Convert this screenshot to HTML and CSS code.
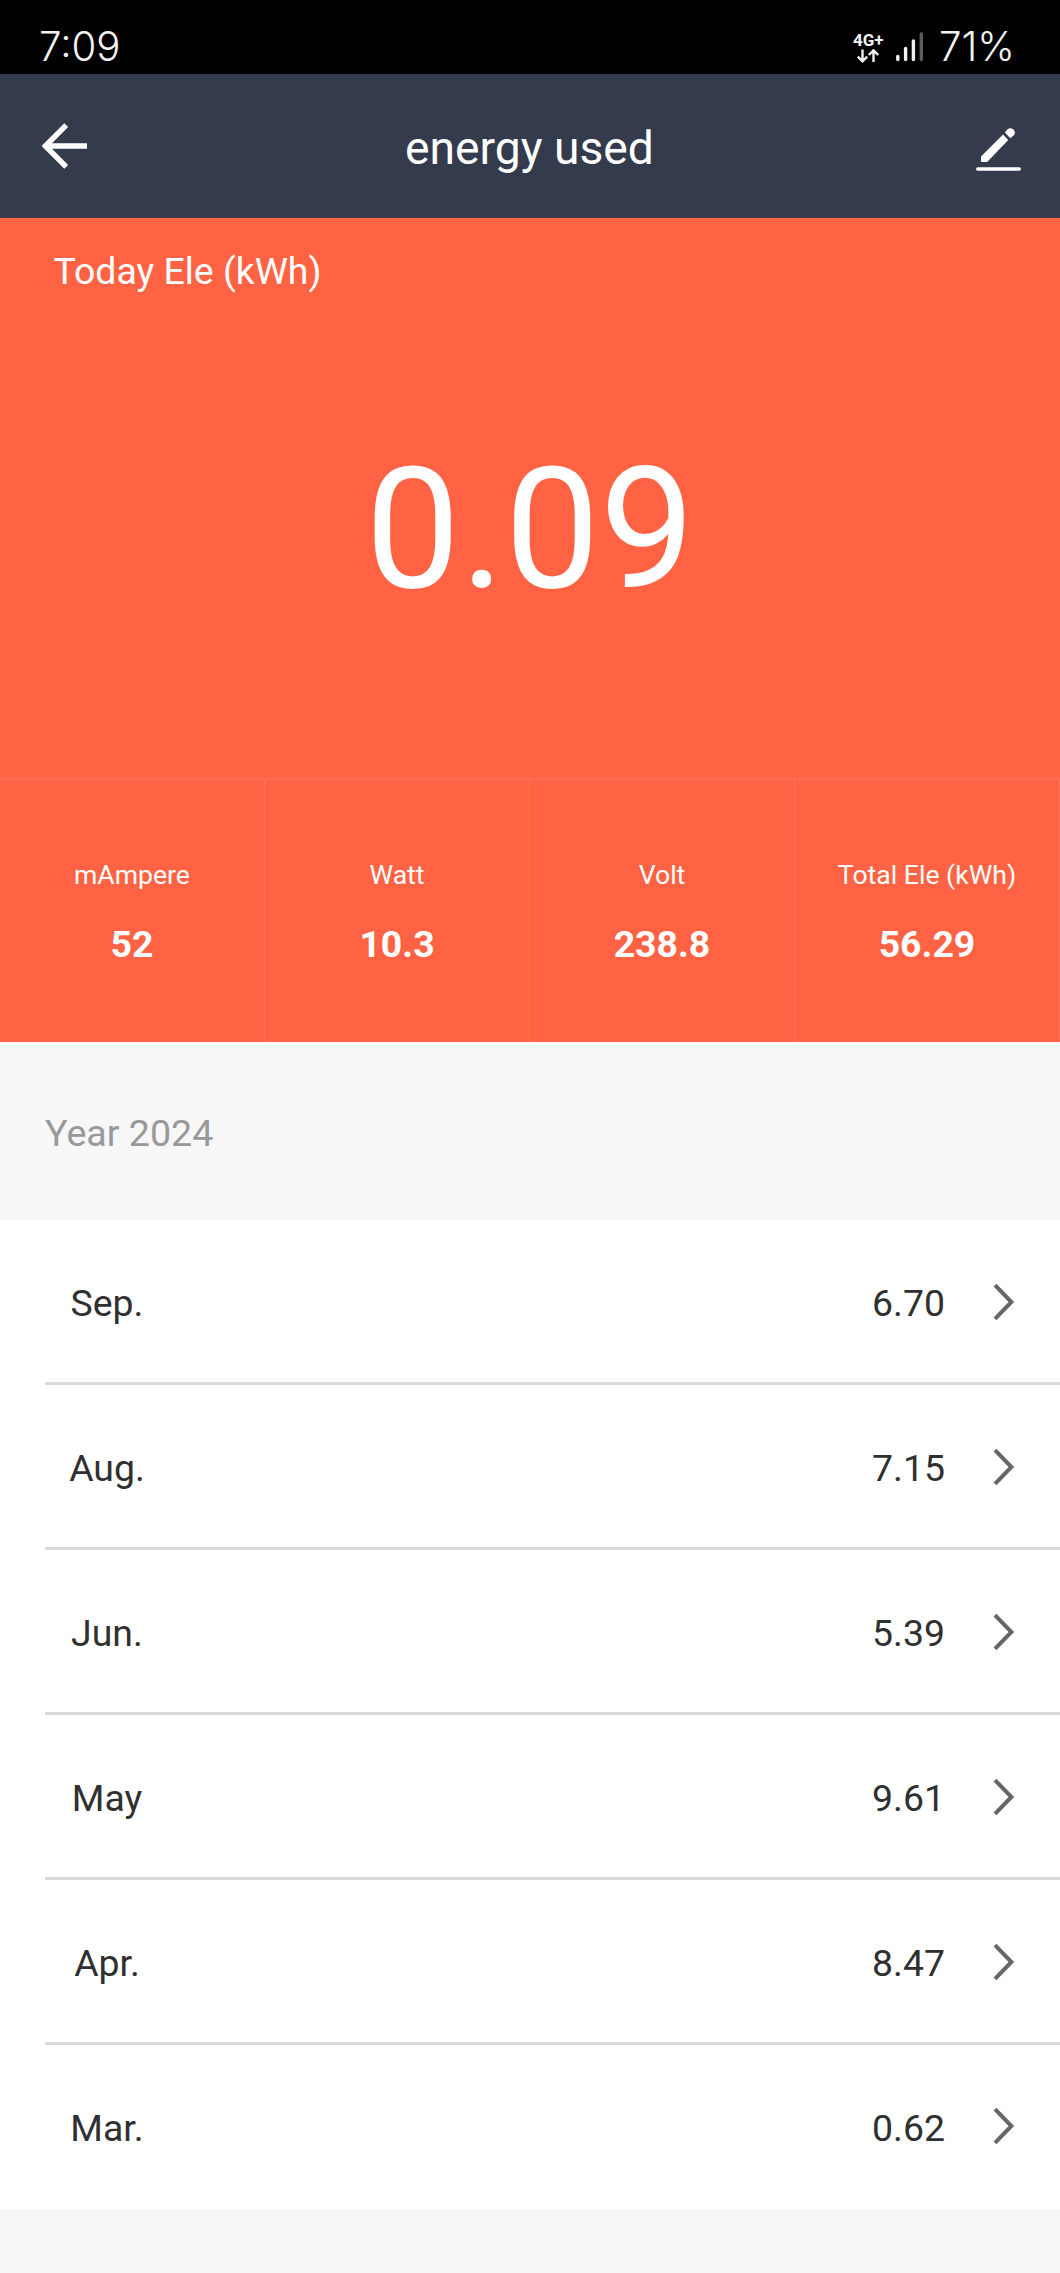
FILE: index.html
```html
<!DOCTYPE html>
<html lang="en">
<head>
<meta charset="utf-8">
<title>energy used</title>
<link rel="stylesheet" href="styles.css">
</head>
<body>
<div class="status">
  <span class="status-text">7:09</span>
  <div class="status-right">
    <div class="network">
      <span class="network-label">4G+</span>
      <svg class="network-arrows" width="24" height="14" viewBox="0 0 24 14"><path d="M6.5 0.5V12M1.8 7.6L6.5 12.3L11.2 7.6M17.5 13V1.5M12.8 6L17.5 1.3L22.2 6"/></svg>
    </div>
    <svg class="signal" width="28" height="30" viewBox="0 0 28 30"><path d="M1.8 24.5V27.5M9.6 16.5V27.5M17.4 9V27.5"/><path class="signal-off" d="M25.3 2V27.5"/></svg>
    <span class="status-text">71%</span>
  </div>
</div>
<header class="header">
  <svg class="back" width="46" height="46" viewBox="0 0 46 46"><path d="M24.2 2.2L3.4 23L24.2 43.8M4 23H45"/></svg>
  <h1 class="title">energy used</h1>
  <svg class="edit" width="46" height="46" viewBox="0 0 46 46"><path d="M6 29.4L28 7.4L33.2 12.9L12.2 35H6.8Q6 35 6 34.2Z"/><path d="M29.8 5.5L32.4 2.6Q35.4 -0.2 38.4 2.6Q41.2 5.6 38.6 8.4L35.4 11.2Z"/><rect x="1" y="40.2" width="45" height="3.6" rx="1.8"/></svg>
</header>
<section class="today">
  <div class="today-label">Today Ele (kWh)</div>
  <div class="today-value">0.09</div>
</section>
<section class="stats">
  <div class="stat"><span class="stat-label">mAmpere</span><span class="stat-value">52</span></div>
  <div class="stat"><span class="stat-label">Watt</span><span class="stat-value">10.3</span></div>
  <div class="stat"><span class="stat-label">Volt</span><span class="stat-value">238.8</span></div>
  <div class="stat"><span class="stat-label">Total Ele (kWh)</span><span class="stat-value">56.29</span></div>
</section>
<h2 class="year">Year 2024</h2>
<ul class="months">
  <li class="month"><span class="month-name">Sep.</span><span class="month-value">6.70</span><svg class="chevron" width="22" height="38" viewBox="0 0 22 38"><path d="M2 2.2L18.4 19L2 35.8"/></svg></li>
  <li class="month"><span class="month-name">Aug.</span><span class="month-value">7.15</span><svg class="chevron" width="22" height="38" viewBox="0 0 22 38"><path d="M2 2.2L18.4 19L2 35.8"/></svg></li>
  <li class="month"><span class="month-name">Jun.</span><span class="month-value">5.39</span><svg class="chevron" width="22" height="38" viewBox="0 0 22 38"><path d="M2 2.2L18.4 19L2 35.8"/></svg></li>
  <li class="month"><span class="month-name">May</span><span class="month-value">9.61</span><svg class="chevron" width="22" height="38" viewBox="0 0 22 38"><path d="M2 2.2L18.4 19L2 35.8"/></svg></li>
  <li class="month"><span class="month-name">Apr.</span><span class="month-value">8.47</span><svg class="chevron" width="22" height="38" viewBox="0 0 22 38"><path d="M2 2.2L18.4 19L2 35.8"/></svg></li>
  <li class="month"><span class="month-name">Mar.</span><span class="month-value">0.62</span><svg class="chevron" width="22" height="38" viewBox="0 0 22 38"><path d="M2 2.2L18.4 19L2 35.8"/></svg></li>
</ul>
</body>
</html>
```
FILE: styles.css
```css
* { box-sizing: border-box; }
body {
  margin: 0;
  min-height: 2273px;
  background: #f7f7f7;
  font-family: Roboto, sans-serif;
  font-size: 37.4px;
  line-height: 44px;
  color: #303030;
}
h1, h2, ul { margin: 0; padding: 0; font-weight: 400; }
svg { display: block; fill: none; flex: none; }

.status {
  display: flex;
  justify-content: space-between;
  height: 73.5px;
  padding: 25px 45px 0 39px;
  background: #000;
  color: #f2f2f2;
}
.status-text { font: 350 40.2px/44px Inter, sans-serif; }
.status-right { display: flex; }
.network { width: 32px; padding-top: 7px; }
.network-label { display: block; font-size: 17px; font-weight: 700; line-height: 16px; }
.network-arrows { margin: 1px 0 0 3px; stroke: #f2f2f2; stroke-width: 2.4; }
.signal { margin: 7px 15px 0 11px; stroke: #f2f2f2; stroke-width: 3.4; stroke-linecap: round; }
.signal-off { stroke: #5c5c5c; }

.header {
  display: flex;
  align-items: center;
  justify-content: space-between;
  height: 144.5px;
  padding: 0 39px 0 42px;
  background: #343b4c;
  color: #fff;
}
.back { stroke: #fff; stroke-width: 5.4; }
.title { padding: 5px 4px 0 0; font-size: 46.2px; line-height: 54px; }
.edit { margin-top: 9px; fill: #fff; }

.today {
  display: flex;
  flex-direction: column;
  height: 560px;
  padding-top: 31px;
  background: #ff6344;
  color: #fff;
}
.today-label { padding-left: 53.5px; }
.today-value { margin-top: 136px; font-size: 169px; line-height: 200px; text-align: center; }

.stats {
  display: grid;
  grid-template-columns: repeat(4, 1fr);
  height: 264px;
  border-top: 2px solid #ff7053;
  background: #ff6344;
  color: #fff;
}
.stat {
  display: flex;
  flex-direction: column;
  align-items: center;
  gap: 31px;
  padding-top: 79px;
  border-right: 1px solid #ff7557;
}
.stat-label { font-size: 26.6px; line-height: 32px; }
.stat-value { font-weight: 700; }

.year {
  height: 178px;
  padding: 69px 0 0 45px;
  font-size: 37.6px;
  color: #999;
}

.months { height: 989px; background: #fff; padding-left: 45px; list-style: none; }
.month {
  display: flex;
  align-items: center;
  height: 165px;
  padding-right: 45px;
  border-bottom: 3px solid #dadada;
}
.month:last-child { height: 164px; border-bottom-color: transparent; }
.month-name { width: 124px; padding-top: 4px; text-align: center; }
.month-value { margin-left: auto; padding-top: 4px; }
.chevron { margin: 1px 0 0 48px; stroke: #666; stroke-width: 4; }
```
